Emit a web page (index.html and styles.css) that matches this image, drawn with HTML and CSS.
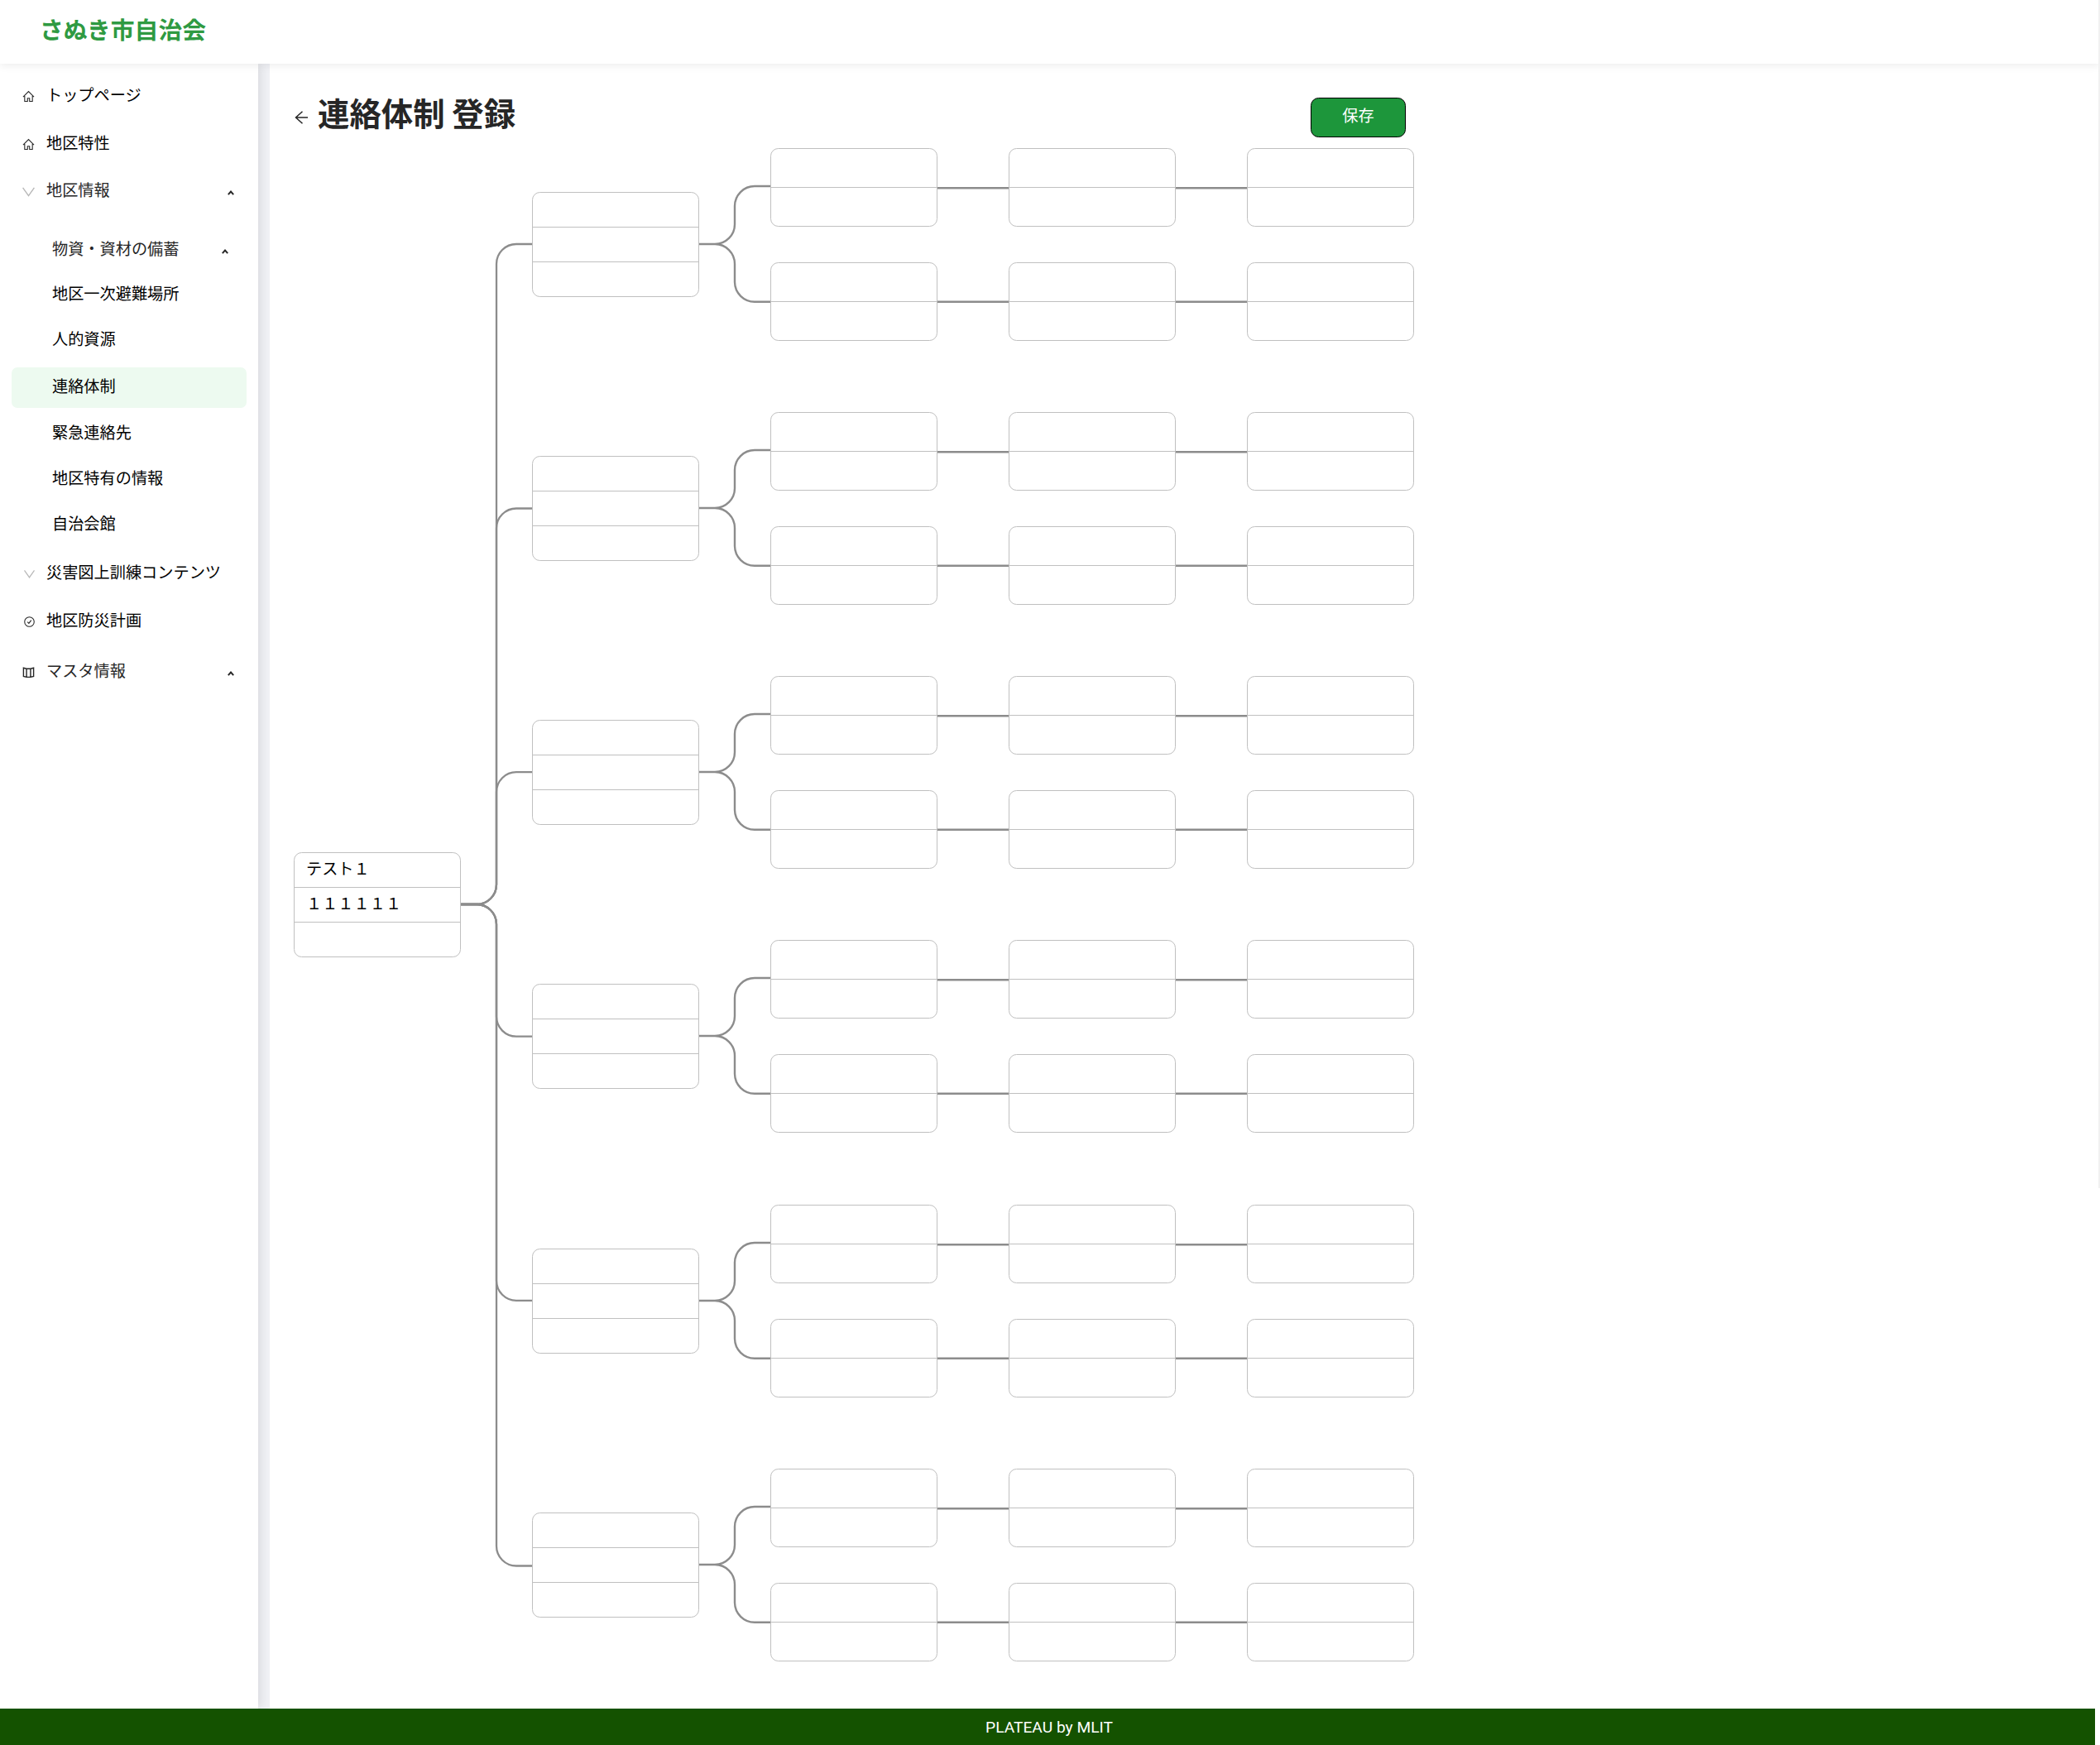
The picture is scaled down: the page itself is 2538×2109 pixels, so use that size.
FILE: index.html
```html
<!DOCTYPE html>
<html lang="ja">
<head>
<meta charset="utf-8">
<title>連絡体制 登録</title>
<link rel="stylesheet" href="styles.css">
</head>
<body>
<svg class="defs" aria-hidden="true">
  <symbol id="home" viewBox="0 0 16 16"><path d="M1 8.6 8 1.6l7 7M3 7.4v7h3.7v-4h2.6v4H13v-7" fill="none" stroke="currentColor" stroke-width="1.15"/></symbol>
  <symbol id="down" viewBox="0 0 16 16"><path d="M.6 3 8 13.400 15.400 3" fill="none" stroke="#b8b8b8" stroke-width="1.6"/></symbol>
  <symbol id="check" viewBox="0 0 16 16"><circle cx="8" cy="8" r="7.1" fill="none" stroke="currentColor" stroke-width="1.3"/><path d="M5.2 8.2l2 2.1 3.6-4.6" fill="none" stroke="currentColor" stroke-width="1.4"/></symbol>
  <symbol id="map" viewBox="0 0 16 16"><path d="M1.5 2.4l3.9 1.1h5.2l3.9-1.1v10.8l-3.9 1.1H5.4l-3.9-1.1zM5.4 3.5v10.8M10.6 3.5v10.8" fill="none" stroke="currentColor" stroke-width="1.5"/></symbol>
  <symbol id="caret" viewBox="0 0 8 6"><path d="M.8 5.1 4 1.5l3.200 3.600" fill="none" stroke="#262626" stroke-width="1.9"/></symbol>
  <symbol id="fork" viewBox="0 0 86 233"><path d="M0 116H19A24 24 0 0 0 43 92V70A24 24 0 0 1 67 46H86M0 116H19A24 24 0 0 1 43 140V162A24 24 0 0 0 67 185.700H86" fill="none" stroke="#8c8c8c" stroke-width="2.400"/></symbol>
  <symbol id="links" viewBox="0 0 86 233"><path d="M0 48.200H86M0 185.800H86" fill="none" stroke="#8c8c8c" stroke-width="2.400"/></symbol>
</svg>
<header class="topbar"><div class="brand">さぬき市自治会</div></header>
<div class="body">
  <nav class="sider">
    <a class="item black first"><svg class="icon"><use href="#home"/></svg><span>トップページ</span></a>
    <a class="item black"><svg class="icon"><use href="#home"/></svg><span>地区特性</span></a>
    <a class="item parent"><svg class="icon"><use href="#down"/></svg><span>地区情報</span><svg class="caret"><use href="#caret"/></svg></a>
    <div class="submenu">
      <a class="sub parent"><span>物資・資材の備蓄</span><svg class="caret"><use href="#caret"/></svg></a>
      <a class="sub black"><span>地区一次避難場所</span></a>
      <a class="sub black"><span>人的資源</span></a>
      <a class="sub black selected"><span>連絡体制</span></a>
      <a class="sub black"><span>緊急連絡先</span></a>
      <a class="sub black"><span>地区特有の情報</span></a>
      <a class="sub black"><span>自治会館</span></a>
    </div>
    <a class="item black"><svg class="icon small"><use href="#down"/></svg><span>災害図上訓練コンテンツ</span></a>
    <a class="item black"><svg class="icon small"><use href="#check"/></svg><span>地区防災計画</span></a>
    <a class="item parent last"><svg class="icon"><use href="#map"/></svg><span>マスタ情報</span><svg class="caret"><use href="#caret"/></svg></a>
  </nav>
  <main class="content">
    <div class="heading">
      <svg class="back" viewBox="0 0 16 16"><path d="M16 8H1.500M9.500 .7 1.500 8l8 7.300" fill="none" stroke="#262626" stroke-width="1.500"/></svg>
      <h1>連絡体制 登録</h1>
      <button class="save">保存</button>
    </div>
    <div class="tree">
      <div class="node three"><div>テスト１</div><div class="phone">１１１１１１</div><div></div></div>
      <svg class="trunk" viewBox="0 0 86 1829"><g fill="none" stroke="#8c8c8c" stroke-width="2.300">
        <path d="M0 914H19A24 24 0 0 0 43 890V140A24 24 0 0 1 67 116H86"/>
        <path d="M0 914H19A24 24 0 0 0 43 890V459.500A24 24 0 0 1 67 435.500H86"/>
        <path d="M0 914H19A24 24 0 0 0 43 890V778.200A24 24 0 0 1 67 754.200H86"/>
        <path d="M0 914H19A24 24 0 0 1 43 938V1049.600A24 24 0 0 0 67 1073.600H86"/>
        <path d="M0 914H19A24 24 0 0 1 43 938V1368.800A24 24 0 0 0 67 1392.800H86"/>
        <path d="M0 914H19A24 24 0 0 1 43 938V1689.500A24 24 0 0 0 67 1713.500H86"/>
      </g></svg>
      <div class="branches">
        <section class="branch">
          <div class="node three"><div></div><div></div><div></div></div>
          <svg class="link"><use href="#fork"/></svg>
          <div class="pair"><div class="node"><div></div><div></div></div><div class="node"><div></div><div></div></div></div>
          <svg class="link"><use href="#links"/></svg>
          <div class="pair"><div class="node"><div></div><div></div></div><div class="node"><div></div><div></div></div></div>
          <svg class="link"><use href="#links"/></svg>
          <div class="pair"><div class="node"><div></div><div></div></div><div class="node"><div></div><div></div></div></div>
        </section>
        <section class="branch">
          <div class="node three"><div></div><div></div><div></div></div>
          <svg class="link"><use href="#fork"/></svg>
          <div class="pair"><div class="node"><div></div><div></div></div><div class="node"><div></div><div></div></div></div>
          <svg class="link"><use href="#links"/></svg>
          <div class="pair"><div class="node"><div></div><div></div></div><div class="node"><div></div><div></div></div></div>
          <svg class="link"><use href="#links"/></svg>
          <div class="pair"><div class="node"><div></div><div></div></div><div class="node"><div></div><div></div></div></div>
        </section>
        <section class="branch">
          <div class="node three"><div></div><div></div><div></div></div>
          <svg class="link"><use href="#fork"/></svg>
          <div class="pair"><div class="node"><div></div><div></div></div><div class="node"><div></div><div></div></div></div>
          <svg class="link"><use href="#links"/></svg>
          <div class="pair"><div class="node"><div></div><div></div></div><div class="node"><div></div><div></div></div></div>
          <svg class="link"><use href="#links"/></svg>
          <div class="pair"><div class="node"><div></div><div></div></div><div class="node"><div></div><div></div></div></div>
        </section>
        <section class="branch">
          <div class="node three"><div></div><div></div><div></div></div>
          <svg class="link"><use href="#fork"/></svg>
          <div class="pair"><div class="node"><div></div><div></div></div><div class="node"><div></div><div></div></div></div>
          <svg class="link"><use href="#links"/></svg>
          <div class="pair"><div class="node"><div></div><div></div></div><div class="node"><div></div><div></div></div></div>
          <svg class="link"><use href="#links"/></svg>
          <div class="pair"><div class="node"><div></div><div></div></div><div class="node"><div></div><div></div></div></div>
        </section>
        <section class="branch">
          <div class="node three"><div></div><div></div><div></div></div>
          <svg class="link"><use href="#fork"/></svg>
          <div class="pair"><div class="node"><div></div><div></div></div><div class="node"><div></div><div></div></div></div>
          <svg class="link"><use href="#links"/></svg>
          <div class="pair"><div class="node"><div></div><div></div></div><div class="node"><div></div><div></div></div></div>
          <svg class="link"><use href="#links"/></svg>
          <div class="pair"><div class="node"><div></div><div></div></div><div class="node"><div></div><div></div></div></div>
        </section>
        <section class="branch">
          <div class="node three"><div></div><div></div><div></div></div>
          <svg class="link"><use href="#fork"/></svg>
          <div class="pair"><div class="node"><div></div><div></div></div><div class="node"><div></div><div></div></div></div>
          <svg class="link"><use href="#links"/></svg>
          <div class="pair"><div class="node"><div></div><div></div></div><div class="node"><div></div><div></div></div></div>
          <svg class="link"><use href="#links"/></svg>
          <div class="pair"><div class="node"><div></div><div></div></div><div class="node"><div></div><div></div></div></div>
        </section>
      </div>
    </div>
  </main>
</div>
<footer class="footer">PLATEAU by MLIT</footer>
<div class="scrollbar"></div>
</body>
</html>
```
FILE: styles.css
```css
* { box-sizing: border-box; }
html, body { margin: 0; height: 2109px; overflow: hidden; }
body {
  display: flex;
  flex-direction: column;
  background: #fff;
  color: #262626;
  font: 400 19.2px/30px "Noto Sans CJK JP", sans-serif;
}
svg { display: block; flex: none; }
.defs { position: absolute; width: 0; height: 0; }

.topbar {
  flex: 0 0 77px;
  padding: 14px 48px;
  background: #fff;
  box-shadow: 0 2px 10px rgba(0, 0, 0, .08);
  z-index: 2;
}
.brand { color: #2f9a42; font-size: 28.8px; font-weight: 700; line-height: 42px; }

.body { flex: 1; display: flex; min-height: 0; background: #f0f1f5; }
.sider {
  width: 312px;
  flex: none;
  background: #fff;
  box-shadow: 2px 0 12px rgba(0, 0, 0, .11);
  padding-top: 9px;
}
.item, .sub { display: flex; align-items: center; height: 58px; }
.item { padding: 0 29px 0 27px; }
.item span, .sub span { padding-bottom: 3px; }
.black { color: #000; }
.icon { width: 15px; height: 15px; margin: 2px 14px 0 0; color: #262626; }
.icon.small { width: 13px; height: 13px; margin: 2px 14px 0 2px; }
.caret { width: 8px; height: 6px; margin: 5px 0 0 auto; }
.item.parent { height: 56px; }
.submenu { padding: 16px 14px 2px; }
.sub { height: 55px; padding: 0 22px 0 49px; }
.sub.parent { height: 54px; }
.sub.selected { height: 49px; margin: 6px 0 3px; padding-bottom: 2px; border-radius: 7px; background: #edfaf0; }
.item.last { height: 58px; margin-top: 3px; }

.content { flex: 1; margin-left: 14px; padding: 0 0 0 29px; background: #fff; }
.heading { display: flex; height: 102px; width: 1354px; align-items: flex-start; }
.back { width: 16px; height: 16px; margin: 57px 12px 0 1px; }
h1 { margin: 29px 0 0; font-size: 38.4px; font-weight: 700; line-height: 58px; color: #262626; }
.save {
  width: 115px;
  height: 48px;
  margin: 41px 10px 0 auto;
  padding: 0 0 6px;
  border: 1px solid #000;
  border-radius: 9.6px;
  background: #1d963b;
  color: #fff;
  font: inherit;
}

.tree { display: flex; align-items: center; height: 1829px; }
.trunk { width: 86px; height: 1829px; }
.branches { display: grid; gap: 86.15px; align-self: flex-start; }
.branch { display: flex; align-items: center; height: 233px; }
.link { width: 86px; height: 233px; }
.pair { display: grid; gap: 43px; }
.node { width: 202px; flex: none; border: 1px solid #c0c0c0; border-radius: 9.6px; }
.node > div { height: 46px; padding-left: 14px; color: #000; }
.node > div + div { height: 47px; border-top: 1px solid #c0c0c0; }
.three > div { height: 41px; line-height: 37px; }
.three > div + div { height: 42px; }

.footer {
  flex: 0 0 44px;
  width: 2532px;
  padding: 1px 0 0 4px;
  background: #145200;
  color: #fff;
  font: 400 19.2px/43px Roboto, sans-serif;
  text-align: center;
  z-index: 1;
}
.scrollbar { position: absolute; top: 0; right: 0; width: 2px; height: 1436px; background: #f1f1f1; z-index: 3; }
```
